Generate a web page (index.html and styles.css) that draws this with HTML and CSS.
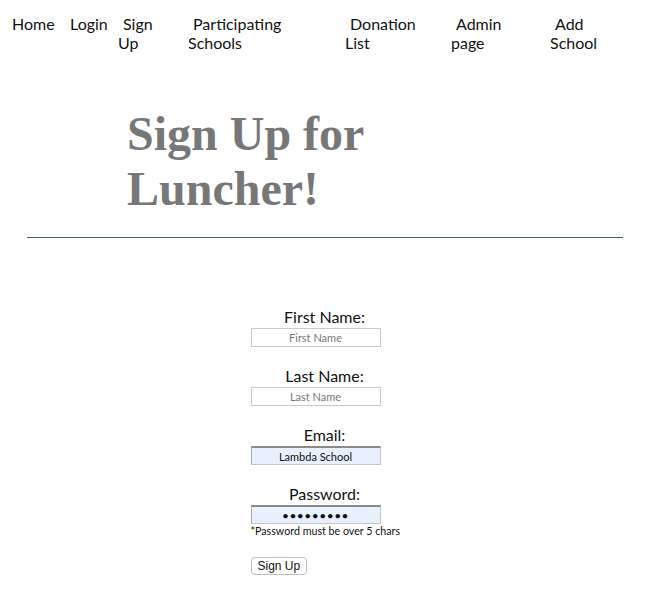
FILE: index.html
```html
<!DOCTYPE html>
<html>
<head>
<meta charset="utf-8">
<link rel="stylesheet" href="styles.css">
</head>
<body>
<nav class="nav">
  <div class="nav-item"><a href="#">Home</a></div>
  <div class="nav-item"><a href="#">Login</a></div>
  <div class="nav-item"><a href="#">Sign Up</a></div>
  <div class="nav-item"><a href="#">Participating Schools</a></div>
  <div class="nav-item"><a href="#">Donation List</a></div>
  <div class="nav-item"><a href="#">Admin page</a></div>
  <div class="nav-item"><a href="#">Add School</a></div>
</nav>
<h1 class="title">Sign Up for Luncher!</h1>
<hr class="rule">
<form class="form">
  <div class="group">
    <label class="label">First Name:</label>
    <input class="field" type="text" placeholder="First Name">
  </div>
  <div class="group">
    <label class="label">Last Name:</label>
    <input class="field" type="text" placeholder="Last Name">
  </div>
  <div class="group">
    <label class="label">Email:</label>
    <input class="field filled" type="text" value="Lambda School">
  </div>
  <div class="group group-last">
    <label class="label">Password:</label>
    <input class="field filled pass" type="password" value="123456789">
    <div class="note">*Password must be over 5 chars</div>
  </div>
  <button class="btn" type="button">Sign Up</button>
</form>
</body>
</html>
```
FILE: styles.css
```css
body {
  margin: 8px;
  font-family: Lato, "Open Sans", sans-serif;
  background: #fff;
  color: #111;
}
.nav {
  display: grid;
  grid-template-columns: 57px 53px 70px 157px 106px 99px auto;
  padding-top: 6px;
  font-size: 16px;
  line-height: 19px;
}
.nav-item {
  width: min-content;
  text-indent: 5px;
}
.nav-item:first-child {
  text-indent: 4px;
}
.nav-item a {
  color: #111;
  text-decoration: none;
}
.title {
  margin: 54px 0 0 119px;
  width: 320px;
  font-family: "Liberation Serif", "Times New Roman", serif;
  font-size: 48px;
  font-weight: bold;
  line-height: 55px;
  color: #777;
}
.rule {
  margin: 21px 16px 0 19px;
  border: none;
  border-top: 1px solid #2b6a6a;
  height: 0;
}
.form {
  width: 148px;
  margin: 69px auto 0;
  padding-left: 2px;
  display: flex;
  flex-direction: column;
  align-items: flex-start;
}
.group {
  width: 148px;
  margin-bottom: 19px;
}
.group-last {
  margin-bottom: 20px;
}
.label {
  display: block;
  text-align: center;
  font-size: 16px;
  line-height: 19px;
  margin-bottom: 2px;
  color: #111;
}
.field {
  display: block;
  box-sizing: border-box;
  width: 130px;
  height: 19px;
  margin: 0;
  padding: 0 2px;
  border: 1px solid #c9c9c9;
  font-family: Lato, sans-serif;
  font-size: 11px;
  text-align: center;
  color: #111;
  background: #fff;
  outline: none;
}
.field::placeholder {
  color: #777;
}
.filled {
  background: #e8f0fe;
  border-color: #c4c4c4;
  border-top: 2px solid #8a8a8a;
  border-left-color: #a9a9a9;
}
.pass {
  font-size: 12px;
  letter-spacing: 0.5px;
}
.note {
  font-size: 10.7px;
  line-height: 13px;
  white-space: nowrap;
  color: #111;
}
.btn {
  font-family: "Liberation Sans", Arial, sans-serif;
  font-size: 12px;
  line-height: 14px;
  padding: 1px 6px;
  height: 18px;
  border: 1px solid #bdbdbd;
  border-radius: 4px;
  background: #fff;
  color: #111;
}
```
